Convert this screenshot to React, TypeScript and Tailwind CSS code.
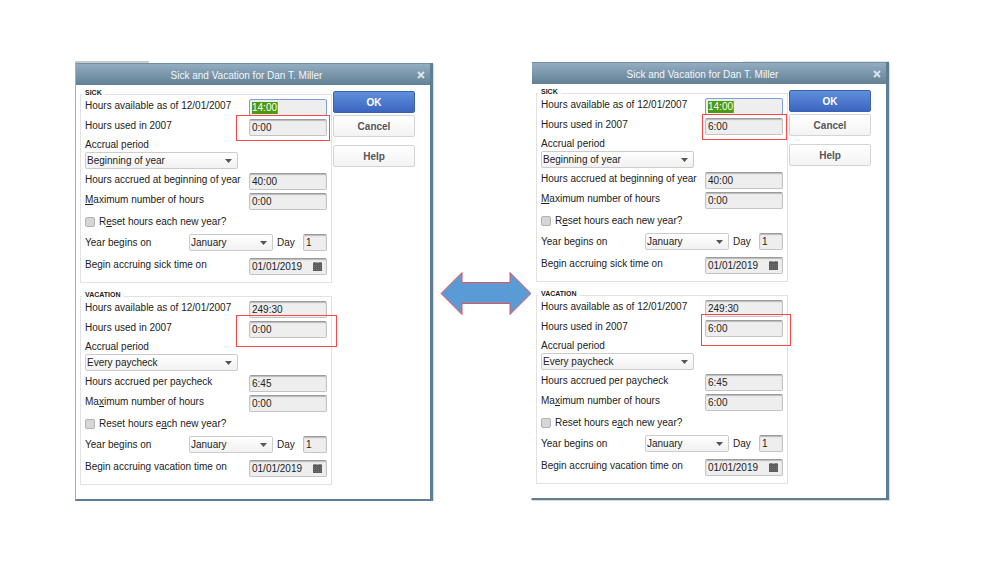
import clsx from 'clsx';
import { useId, type ReactNode } from 'react';

type Section = {
  title: string;
  available: string;
  used: string;
  period: string;
  accruedLabel: string;
  accrued: string;
  maxLabel: ReactNode;
  max: string;
  resetLabel: ReactNode;
  beginLabel: string;
  highlighted?: boolean;
  marker: string;
};

const baseField = 'block h-[17px] rounded-[2px] border pl-[2px] text-[10px] leading-[15px] outline-none';

const fieldClass = clsx(
  baseField,
  'border-[#c4c4c4] border-t-[#9c9c9c] bg-[#eeeeee] text-[#222222] shadow-[inset_0_1px_1px_#b8b8b8]',
);

const selectedField = clsx(
  baseField,
  'border-[#7d9fd8] bg-[#eeeeee] bg-[linear-gradient(to_right,#4c9a10_25px,#c26ad6_25px)] bg-[length:26px_12px] bg-[position:2px_2px] bg-no-repeat text-white',
);

function Row({ id, label, children }: { id: string; label: ReactNode; children: ReactNode }) {
  return (
    <div className="flex h-5 items-start justify-between">
      <label htmlFor={id} className="leading-[13px]">
        {label}
      </label>
      {children}
    </div>
  );
}

function DropDown({ id, value, className }: { id: string; value: string; className: string }) {
  return (
    <div className={clsx('relative', className)}>
      <select
        id={id}
        defaultValue={value}
        className="block h-[17px] w-full appearance-none rounded-[2px] border border-[#cccccc] bg-linear-to-b from-white to-[#f1f1f1] pl-px text-[10px] leading-[15px] text-[#222222] outline-none"
      >
        <option>{value}</option>
      </select>
      <svg viewBox="0 0 7 4" className="pointer-events-none absolute top-[7px] right-[6px] h-1 w-[7px]" aria-hidden="true">
        <path d="M0 0h7L3.5 4z" fill="#555555" />
      </svg>
    </div>
  );
}

function DateField({ id }: { id: string }) {
  return (
    <div className="relative w-[78px]">
      <input id={id} type="text" defaultValue="01/01/2019" className={clsx(fieldClass, 'w-full')} />
      <svg viewBox="0 0 9 9" className="pointer-events-none absolute top-1 right-[5px] size-[9px]" aria-hidden="true">
        <path d="M0 .5h1.500V0h1v.5h4V0h1v.5H9V9H0z" fill="#5c5c5c" />
        <path d="M1 3.500h7M1 5.500h7M1 7.500h7" stroke="#8a8a8a" strokeWidth=".5" strokeDasharray="1 1" />
      </svg>
    </div>
  );
}

function TimeSection({ section }: { section: Section }) {
  const id = useId();
  return (
    <fieldset className="border border-[#e2e2e2] pb-[7px]">
      <legend className="ml-px h-[10px] px-[3px] text-[7px] leading-[7px] font-bold text-[#222222]">{section.title}</legend>
      <div className="px-1">
        <Row id={`${id}-available`} label="Hours available as of 12/01/2007">
          <input
            id={`${id}-available`}
            type="text"
            defaultValue={section.available}
            className={clsx('w-[78px]', section.highlighted ? selectedField : fieldClass)}
          />
        </Row>
        <Row id={`${id}-used`} label="Hours used in 2007">
          <div className="relative w-[78px]">
            <input id={`${id}-used`} type="text" defaultValue={section.used} className={clsx(fieldClass, 'w-full')} />
            <div className={clsx('pointer-events-none absolute z-10 border border-[#f84848]', section.marker)} />
          </div>
        </Row>
        <label htmlFor={`${id}-period`} className="block h-[13px] pt-px leading-[10px]">
          Accrual period
        </label>
        <div className="h-[21px]">
          <DropDown id={`${id}-period`} value={section.period} className="w-[153px]" />
        </div>
        <Row id={`${id}-accrued`} label={section.accruedLabel}>
          <input id={`${id}-accrued`} type="text" defaultValue={section.accrued} className={clsx(fieldClass, 'w-[78px]')} />
        </Row>
        <Row id={`${id}-max`} label={section.maxLabel}>
          <input id={`${id}-max`} type="text" defaultValue={section.max} className={clsx(fieldClass, 'w-[78px]')} />
        </Row>
        <div className="flex h-[21px] items-center gap-1 pb-1">
          <input
            id={`${id}-reset`}
            type="checkbox"
            className="size-[10px] appearance-none rounded-[2px] border border-[#b2b2b2] bg-[#d6d6d6]"
          />
          <label htmlFor={`${id}-reset`}>{section.resetLabel}</label>
        </div>
        <div className="flex h-6 items-start">
          <label htmlFor={`${id}-month`} className="flex-1 leading-[17px]">
            Year begins on
          </label>
          <DropDown id={`${id}-month`} value="January" className="w-[84px]" />
          <label htmlFor={`${id}-day`} className="w-[30px] pl-1 leading-[17px]">
            Day
          </label>
          <input id={`${id}-day`} type="text" defaultValue="1" className={clsx(fieldClass, 'w-[24px]')} />
        </div>
        <div className="flex items-start justify-between">
          <label htmlFor={`${id}-begin`} className="leading-[13px]">
            {section.beginLabel}
          </label>
          <DateField id={`${id}-begin`} />
        </div>
      </div>
    </fieldset>
  );
}

const plainButton =
  'h-[22px] rounded-[2px] border border-[#d4d4d4] bg-linear-to-b from-white to-[#f3f3f3] text-[10px] font-bold text-[#555555]';

function Dialog({ sections, className }: { sections: Section[]; className?: string }) {
  return (
    <section className={clsx('border-r-3 border-b-2 border-[#5f7d93] bg-white text-[10px] text-[#222222] shadow-[1px_1px_1px_#d5dde3]', className)}>
      <header className="flex h-[22px] items-center border-t border-[#7590a4] bg-linear-to-b from-[#93adc0] to-[#628096]">
        <h2 className="flex-1 pt-px text-center text-[10px] text-[#f4f7f9]">Sick and Vacation for Dan T. Miller</h2>
        <button type="button" aria-label="Close" className="pr-[5px]">
          <svg viewBox="0 0 8 8" className="size-2" aria-hidden="true">
            <path d="M1 1l6 6M7 1L1 7" stroke="#dde3e8" strokeWidth="2" />
          </svg>
        </button>
      </header>
      <div className="flex gap-px pt-1 pb-[14px] pl-1">
        <div className="flex w-[252px] flex-col gap-2">
          {sections.map((section) => (
            <TimeSection key={section.title} section={section} />
          ))}
        </div>
        <div className="flex w-[82px] flex-col pt-[2px]">
          <button
            type="button"
            className="h-[22px] rounded-[2px] border border-[#3b62ad] bg-linear-to-b from-[#5f8fdb] to-[#3c65c0] text-[10px] font-bold text-white"
          >
            OK
          </button>
          <button type="button" className={clsx(plainButton, 'mt-[2px]')}>
            Cancel
          </button>
          <button type="button" className={clsx(plainButton, 'mt-2')}>
            Help
          </button>
        </div>
      </div>
    </section>
  );
}

const sick = {
  title: 'SICK',
  available: '14:00',
  highlighted: true,
  period: 'Beginning of year',
  accruedLabel: 'Hours accrued at beginning of year',
  accrued: '40:00',
  max: '0:00',
  maxLabel: (
    <>
      <u>M</u>aximum number of hours
    </>
  ),
  resetLabel: (
    <>
      R<u>e</u>set hours each new year?
    </>
  ),
  beginLabel: 'Begin accruing sick time on',
};

const vacation = {
  title: 'VACATION',
  available: '249:30',
  period: 'Every paycheck',
  accruedLabel: 'Hours accrued per paycheck',
  accrued: '6:45',
  maxLabel: (
    <>
      Ma<u>x</u>imum number of hours
    </>
  ),
  resetLabel: (
    <>
      Reset hours e<u>a</u>ch new year?
    </>
  ),
  beginLabel: 'Begin accruing vacation time on',
};

const before: Section[] = [
  { ...sick, used: '0:00', marker: '-top-1 -left-[13px] h-[26px] w-[94px]' },
  { ...vacation, used: '0:00', max: '0:00', marker: '-top-[6px] -left-[13px] h-8 w-[101px]' },
];

const after: Section[] = [
  { ...sick, used: '6:00', marker: '-top-1 -left-[3px] h-[26px] w-[85px]' },
  { ...vacation, used: '6:00', max: '6:00', marker: '-top-[6px] -left-1 h-8 w-[90px]' },
];

export default function App() {
  return (
    <main className="flex items-start bg-white pt-[61px] pr-[110px] pl-[75px] font-['Liberation_Sans',Arial,sans-serif]">
      <div className="min-w-[340px] flex-1">
        <div className="h-[2px] w-[74px] bg-[#c9c9c9]" />
        <Dialog sections={before} className="border-l border-l-[#9db0bf]" />
      </div>
      <div className="w-[98px] shrink-0 pt-[210px] pl-[7px]">
        <svg viewBox="0 0 92 44" className="h-11 w-[92px]" role="img" aria-label="Before and after">
          <path d="M1 22.500L22 1.500v10h48v-10l21 21-21 21v-11H22v11z" fill="#5b9bd5" stroke="#f05050" strokeWidth="1" />
        </svg>
      </div>
      <div className="min-w-[340px] flex-1">
        <div className="ml-auto h-px w-[146px] bg-[#e0e4e7]" />
        <Dialog sections={after} className="border-l border-l-white" />
      </div>
    </main>
  );
}
